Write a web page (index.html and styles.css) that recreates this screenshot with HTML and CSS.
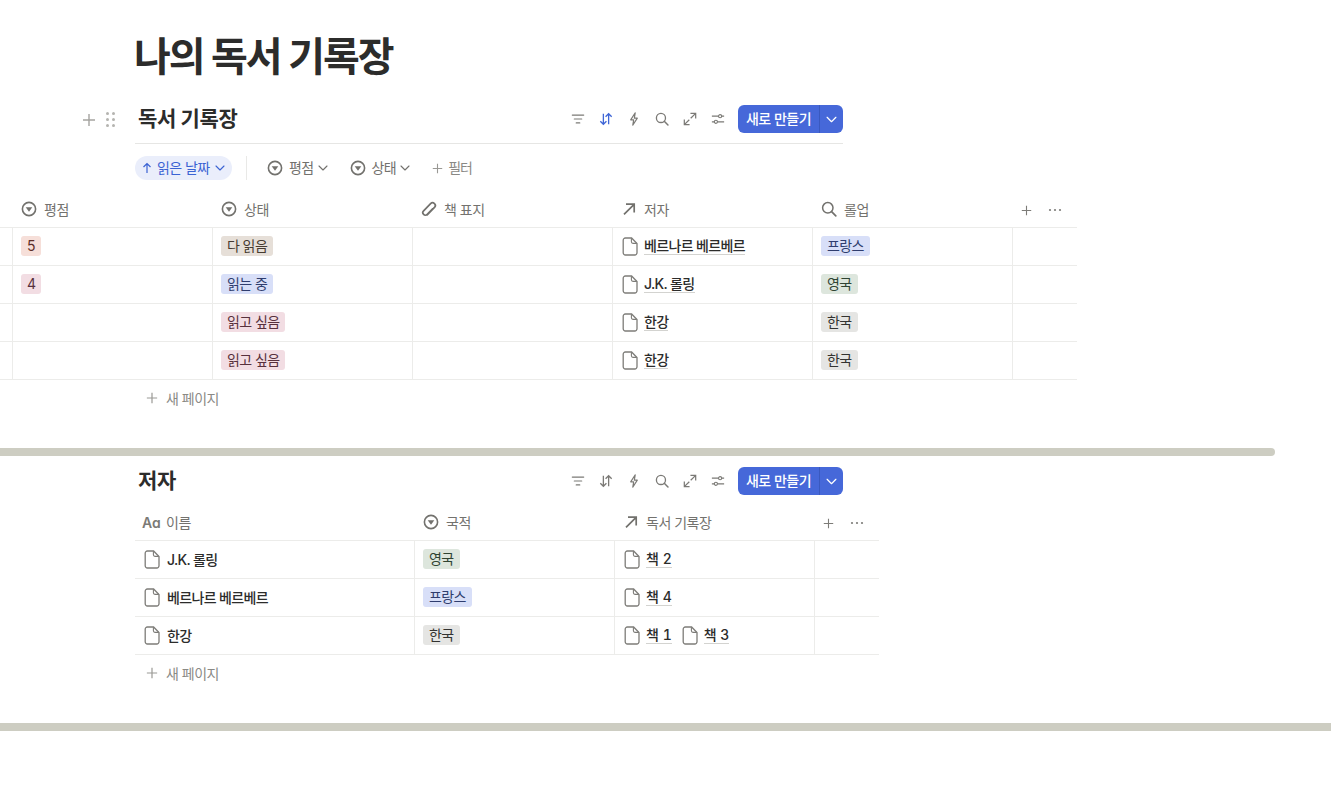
FILE: index.html
```html
<!DOCTYPE html>
<html lang="ko">
  <head>
    <meta charset="UTF-8" />
    <title>나의 독서 기록장</title>
    <link rel="stylesheet" href="styles.css">
  </head>
  <body>
    <svg class="defs" width="0" height="0">
      <defs>
        <symbol id="i-select" viewBox="0 0 16 16">
          <circle cx="8" cy="8" r="6.6" fill="none" stroke="currentColor" stroke-width="1.6" />
          <path d="M4.7 6.300h6.600L8 10.800z" fill="currentColor" />
        </symbol>
        <symbol id="i-doc" viewBox="0 0 16 19">
          <path d="M3.4 1h6.2l5.4 5.6v9.2a2.2 2.2 0 0 1-2.2 2.2H3.4a2.2 2.2 0 0 1-2.2-2.2V3.2A2.2 2.2 0 0 1 3.4 1z" fill="none" stroke="currentColor" stroke-width="1.3" />
          <path d="M9.4 1.2v3.6a1.6 1.6 0 0 0 1.6 1.6h3.8" fill="none" stroke="currentColor" stroke-width="1.1" />
        </symbol>
        <symbol id="i-relation" viewBox="0 0 16 16">
          <path d="M3 13.4 12.6 3.8M5 3.200h8.200v8.200" fill="none" stroke="currentColor" stroke-width="1.7" />
        </symbol>
        <symbol id="i-search" viewBox="0 0 16 16">
          <circle cx="6.800" cy="6.800" r="5.200" fill="none" stroke="currentColor" stroke-width="1.500" />
          <path d="m10.600 10.600 4.200 4.200" fill="none" stroke="currentColor" stroke-width="1.700" stroke-linecap="round" />
        </symbol>
        <symbol id="i-clip" viewBox="0 0 16 16">
          <path d="M6.200 13.900 13.500 6.400a2.700 2.700 0 0 0-3.900-3.800L2.600 9.800a2.500 2.500 0 0 0 3.600 3.600l5.400-5.600" fill="none" stroke="currentColor" stroke-width="1.700" stroke-linecap="round" />
        </symbol>
        <symbol id="i-plus" viewBox="0 0 14 14">
          <path d="M7 1v12M1 7h12" fill="none" stroke="currentColor" stroke-width="1.400" />
        </symbol>
        <symbol id="i-chev" viewBox="0 0 10 6">
          <path d="m1 1 4 4 4-4" fill="none" stroke="currentColor" stroke-width="1.100" stroke-linecap="round" stroke-linejoin="round" />
        </symbol>
        <symbol id="i-more" viewBox="0 0 14 4">
          <circle cx="2" cy="2" r="1.100" fill="currentColor" />
          <circle cx="7" cy="2" r="1.100" fill="currentColor" />
          <circle cx="12" cy="2" r="1.100" fill="currentColor" />
        </symbol>
        <symbol id="i-filter" viewBox="0 0 16 16">
          <path d="M1.500 3.500h13M3.800 8h8.400M6 12.500h4" fill="none" stroke="currentColor" stroke-width="1.400" stroke-linecap="round" />
        </symbol>
        <symbol id="i-sort" viewBox="0 0 16 16">
          <path d="M5 2v12M1.500 10.500 5 14l3.500-3.500M11 14V2M7.500 5.500 11 2l3.500 3.500" fill="none" stroke="currentColor" stroke-width="1.500" />
        </symbol>
        <symbol id="i-bolt" viewBox="0 0 16 16">
          <path d="M9.400 1 4.200 9h3.400l-1 6 5.200-8H8.400z" fill="none" stroke="currentColor" stroke-width="1.300" stroke-linejoin="round" />
        </symbol>
        <symbol id="i-expand" viewBox="0 0 16 16">
          <path d="M8.800 7.200 14.500 1.500M8.500 1.500h6v6M7.200 8.800 1.500 14.500M1.500 8.500v6h6" fill="none" stroke="currentColor" stroke-width="1.400" />
        </symbol>
        <symbol id="i-sliders" viewBox="0 0 16 16">
          <path d="M1 4.800h7.600M12.200 4.800H15M1 11.200h2.800M7.400 11.200H15" fill="none" stroke="currentColor" stroke-width="1.400" />
          <circle cx="10.400" cy="4.800" r="1.800" fill="none" stroke="currentColor" stroke-width="1.300" />
          <circle cx="5.600" cy="11.200" r="1.800" fill="none" stroke="currentColor" stroke-width="1.300" />
        </symbol>
      </defs>
    </svg>

    <h1 class="page-title">나의 독서 기록장</h1>

    <section class="view">
      <div class="view-head view-head-line">
        <div class="block-handle">
          <svg class="handle-plus"><use href="#i-plus" /></svg>
          <span class="handle-dots"><i></i><i></i><i></i><i></i><i></i><i></i></span>
        </div>
        <h2 class="view-title">독서 기록장</h2>
        <div class="tools">
          <svg class="tool"><use href="#i-filter" /></svg>
          <svg class="tool tool-on"><use href="#i-sort" /></svg>
          <svg class="tool"><use href="#i-bolt" /></svg>
          <svg class="tool"><use href="#i-search" /></svg>
          <svg class="tool"><use href="#i-expand" /></svg>
          <svg class="tool"><use href="#i-sliders" /></svg>
        </div>
        <div class="new-btn">
          <span class="new-main">새로 만들기</span>
          <span class="new-arrow"><svg class="chev-white"><use href="#i-chev" /></svg></span>
        </div>
      </div>

      <div class="filters">
        <span class="sort-chip">
          <svg class="chip-arrow" viewBox="0 0 10 12"><path d="M5 11V1.500M1.500 5 5 1.500 8.500 5" fill="none" stroke="currentColor" stroke-width="1.200" /></svg>
          읽은 날짜
          <svg class="chev"><use href="#i-chev" /></svg>
        </span>
        <span class="filter-sep"></span>
        <span class="filter-item"><svg class="icon"><use href="#i-select" /></svg>평점<svg class="chev"><use href="#i-chev" /></svg></span>
        <span class="filter-item"><svg class="icon"><use href="#i-select" /></svg>상태<svg class="chev"><use href="#i-chev" /></svg></span>
        <span class="filter-add"><svg class="plus-sm"><use href="#i-plus" /></svg>필터</span>
      </div>
    </section>

    <div class="table books">
      <div class="row head">
        <div class="cell"></div>
        <div class="cell"><svg class="icon"><use href="#i-select" /></svg>평점</div>
        <div class="cell"><svg class="icon"><use href="#i-select" /></svg>상태</div>
        <div class="cell"><svg class="icon"><use href="#i-clip" /></svg>책 표지</div>
        <div class="cell"><svg class="icon"><use href="#i-relation" /></svg>저자</div>
        <div class="cell"><svg class="icon"><use href="#i-search" /></svg>롤업</div>
        <div class="cell head-actions"><svg class="plus-sm"><use href="#i-plus" /></svg><svg class="more"><use href="#i-more" /></svg></div>
      </div>
      <div class="row">
        <div class="cell"></div>
        <div class="cell"><span class="tag red">5</span></div>
        <div class="cell"><span class="tag brown">다 읽음</span></div>
        <div class="cell"></div>
        <div class="cell"><span class="link"><svg class="doc"><use href="#i-doc" /></svg><b>베르나르 베르베르</b></span></div>
        <div class="cell"><span class="tag blue">프랑스</span></div>
        <div class="cell"></div>
      </div>
      <div class="row">
        <div class="cell"></div>
        <div class="cell"><span class="tag pink">4</span></div>
        <div class="cell"><span class="tag blue">읽는 중</span></div>
        <div class="cell"></div>
        <div class="cell"><span class="link"><svg class="doc"><use href="#i-doc" /></svg><b>J.K. 롤링</b></span></div>
        <div class="cell"><span class="tag green">영국</span></div>
        <div class="cell"></div>
      </div>
      <div class="row">
        <div class="cell"></div>
        <div class="cell"></div>
        <div class="cell"><span class="tag pink">읽고 싶음</span></div>
        <div class="cell"></div>
        <div class="cell"><span class="link"><svg class="doc"><use href="#i-doc" /></svg><b>한강</b></span></div>
        <div class="cell"><span class="tag gray">한국</span></div>
        <div class="cell"></div>
      </div>
      <div class="row">
        <div class="cell"></div>
        <div class="cell"></div>
        <div class="cell"><span class="tag pink">읽고 싶음</span></div>
        <div class="cell"></div>
        <div class="cell"><span class="link"><svg class="doc"><use href="#i-doc" /></svg><b>한강</b></span></div>
        <div class="cell"><span class="tag gray">한국</span></div>
        <div class="cell"></div>
      </div>
    </div>
    <div class="new-page"><svg class="plus-sm"><use href="#i-plus" /></svg>새 페이지</div>

    <div class="divider divider-short"></div>

    <section class="view">
      <div class="view-head view-head-second">
        <h2 class="view-title">저자</h2>
        <div class="tools">
          <svg class="tool"><use href="#i-filter" /></svg>
          <svg class="tool"><use href="#i-sort" /></svg>
          <svg class="tool"><use href="#i-bolt" /></svg>
          <svg class="tool"><use href="#i-search" /></svg>
          <svg class="tool"><use href="#i-expand" /></svg>
          <svg class="tool"><use href="#i-sliders" /></svg>
        </div>
        <div class="new-btn">
          <span class="new-main">새로 만들기</span>
          <span class="new-arrow"><svg class="chev-white"><use href="#i-chev" /></svg></span>
        </div>
      </div>
    </section>

    <div class="table authors">
      <div class="row head">
        <div class="cell name-head"><span class="aa">Aa</span>이름</div>
        <div class="cell"><svg class="icon"><use href="#i-select" /></svg>국적</div>
        <div class="cell"><svg class="icon"><use href="#i-relation" /></svg>독서 기록장</div>
        <div class="cell head-actions"><svg class="plus-sm"><use href="#i-plus" /></svg><svg class="more"><use href="#i-more" /></svg></div>
      </div>
      <div class="row">
        <div class="cell name-cell"><svg class="doc"><use href="#i-doc" /></svg><b>J.K. 롤링</b></div>
        <div class="cell"><span class="tag green">영국</span></div>
        <div class="cell"><span class="link"><svg class="doc"><use href="#i-doc" /></svg><b class="book">책 2</b></span></div>
        <div class="cell"></div>
      </div>
      <div class="row">
        <div class="cell name-cell"><svg class="doc"><use href="#i-doc" /></svg><b>베르나르 베르베르</b></div>
        <div class="cell"><span class="tag blue">프랑스</span></div>
        <div class="cell"><span class="link"><svg class="doc"><use href="#i-doc" /></svg><b class="book">책 4</b></span></div>
        <div class="cell"></div>
      </div>
      <div class="row">
        <div class="cell name-cell"><svg class="doc"><use href="#i-doc" /></svg><b>한강</b></div>
        <div class="cell"><span class="tag gray">한국</span></div>
        <div class="cell links">
          <span class="link"><svg class="doc"><use href="#i-doc" /></svg><b class="book">책 1</b></span>
          <span class="link"><svg class="doc"><use href="#i-doc" /></svg><b class="book">책 3</b></span>
        </div>
        <div class="cell"></div>
      </div>
    </div>
    <div class="new-page"><svg class="plus-sm"><use href="#i-plus" /></svg>새 페이지</div>

    <div class="divider divider-full"></div>
  </body>
</html>
```

FILE: styles.css
```css
* {
  margin: 0;
  padding: 0;
  box-sizing: border-box;
}

body {
  width: 1331px;
  height: 799px;
  overflow: hidden;
  background-color: #fff;
  color: #2c2c2b;
  font-family: Inter, "Noto Sans CJK KR", sans-serif;
  font-size: 14px;
}

.defs {
  position: absolute;
}

svg {
  display: block;
  flex: none;
}

.page-title {
  margin: 34px 0 0 134px;
  height: 46px;
  font-size: 40px;
  line-height: 46px;
  font-weight: 700;
  letter-spacing: -2px;
  color: #2c2c2b;
}

/* view header */
.view {
  margin-left: 135px;
  width: 708px;
}

.view-head {
  position: relative;
  display: flex;
  padding-left: 3px;
}

.view-head-line {
  margin-top: 25px;
  height: 39px;
  border-bottom: 1px solid #e6e6e4;
}

.view-head-second {
  margin-top: 11px;
  height: 28px;
}

.block-handle {
  position: absolute;
  left: -53px;
  top: 7px;
  display: flex;
  align-items: center;
  gap: 10px;
}

.handle-plus {
  width: 14px;
  height: 14px;
  color: #a5a4a0;
}

.handle-dots {
  display: grid;
  grid-template-columns: 3px 3px;
  grid-auto-rows: 3px;
  column-gap: 3px;
  row-gap: 3px;
}

.handle-dots i {
  width: 3px;
  height: 3px;
  border-radius: 50%;
  background-color: #b5b4b0;
}

.view-title {
  font-size: 21px;
  line-height: 28px;
  font-weight: 700;
  letter-spacing: -0.35px;
  color: #2c2c2b;
}

.tools {
  margin-left: auto;
  display: flex;
  align-items: center;
  height: 28px;
  gap: 14px;
  padding-right: 13px;
  color: #7b7a76;
}

.tool {
  width: 14px;
  height: 14px;
}

.tool-on {
  color: #3f66d6;
}

.new-btn {
  display: flex;
  width: 105px;
  height: 28px;
  border-radius: 6px;
  overflow: hidden;
  background-color: #4668d9;
  color: #fff;
  font-weight: 500;
  letter-spacing: -0.5px;
  line-height: 28px;
}

.new-main {
  width: 81px;
  text-align: center;
  white-space: nowrap;
}

.new-arrow {
  flex: 1;
  display: flex;
  align-items: center;
  justify-content: center;
  border-left: 1px solid #3a59bf;
}

.chev-white {
  width: 11px;
  height: 7px;
}

/* filter row */
.filters {
  margin-top: 12px;
  height: 24px;
  display: flex;
  align-items: center;
  color: #72716d;
  letter-spacing: -0.6px;
  white-space: nowrap;
  line-height: 22px;
}

.sort-chip {
  width: 97px;
  height: 24px;
  padding-left: 7px;
  display: flex;
  align-items: center;
  border-radius: 12px;
  background-color: #eaeefb;
  color: #3b63d3;
}

.chip-arrow {
  width: 10px;
  height: 12px;
  margin-right: 5px;
}

.chev {
  width: 10px;
  height: 6px;
  margin-left: 4px;
}

.sort-chip .chev {
  margin-left: 6px;
}

.filter-sep {
  width: 1px;
  height: 24px;
  margin: 0 20px 0 14px;
  background-color: #e9e9e7;
}

.filter-item {
  display: flex;
  align-items: center;
  margin-right: 22px;
}

.filter-add {
  display: flex;
  align-items: center;
  color: #8a8985;
  letter-spacing: -0.9px;
}

.filter-add .plus-sm {
  margin-right: 5px;
}

.icon {
  width: 16px;
  height: 16px;
  margin-right: 6px;
  color: #72716d;
}

.plus-sm {
  width: 11px;
  height: 11px;
  color: #9a9995;
}

/* tables */
.table {
  color: #2c2c2b;
}

.books {
  margin-top: 12px;
  width: 1077px;
}

.authors {
  margin: 10px 0 0 135px;
  width: 744px;
}

.row {
  display: grid;
  height: 38px;
  border-bottom: 1px solid #ececea;
}

.books .row {
  grid-template-columns: 13px repeat(5, 200px) 64px;
}

.authors .row {
  grid-template-columns: 280px 200px 200px 64px;
}

.row.head {
  height: 36px;
  color: #73726e;
  letter-spacing: -0.5px;
}

.cell {
  display: flex;
  align-items: center;
  gap: 8px;
  padding-left: 8px;
  padding-bottom: 1px;
  border-right: 1px solid #ececea;
  white-space: nowrap;
  overflow: hidden;
}

.cell:last-child {
  border-right: none;
}

.books .cell:first-child {
  padding-left: 0;
}

.head .cell {
  border-right: none;
  gap: 0;
  padding-left: 8px;
}

.head .icon {
  margin-right: 7px;
}

.head .head-actions {
  padding-top: 1px;
  padding-bottom: 0;
}

.head-actions .plus-sm {
  color: #7d7c78;
}

.more {
  width: 14px;
  height: 4px;
  margin-left: 16px;
  color: #7d7c78;
}

.head .name-head {
  padding-left: 7px;
}

.aa {
  width: 24px;
  color: #7b7a76;
  font-weight: 600;
  font-size: 14px;
  letter-spacing: 0;
  font-feature-settings: "cv11";
}

.name-cell {
  padding-left: 9px;
}

.name-cell b,
.link b {
  font-weight: 500;
  letter-spacing: -0.65px;
  color: #2c2c2b;
}

.doc {
  width: 16px;
  height: 19px;
  color: #7d7c78;
}

.name-cell .doc {
  margin-right: -1px;
}

.link {
  display: inline-flex;
  align-items: center;
  gap: 6px;
  margin-left: 1px;
}

.links {
  gap: 9px;
}

.link b {
  border-bottom: 1px solid #d3d3d0;
  line-height: 17px;
}

.link b.book {
  letter-spacing: 0;
  font-variant-numeric: tabular-nums;
}

.tag {
  height: 20px;
  padding: 0 6px;
  border-radius: 3px;
  line-height: 20px;
  letter-spacing: -0.6px;
}

.tag.red {
  background-color: #f6dfd9;
  color: #5d2f28;
}

.tag.pink {
  background-color: #f2dde3;
  color: #57303c;
}

.tag.brown {
  background-color: #e6dfd8;
  color: #463b30;
}

.tag.blue {
  background-color: #d8dff8;
  color: #2f3d6e;
}

.tag.green {
  background-color: #dde6dd;
  color: #2f4433;
}

.tag.gray {
  background-color: #e5e5e3;
  color: #333331;
}

.new-page {
  margin-left: 146px;
  height: 38px;
  padding-bottom: 2px;
  display: flex;
  align-items: center;
  color: #8a8985;
  letter-spacing: -0.5px;
}

.new-page .plus-sm {
  width: 12px;
  height: 12px;
  margin-right: 8px;
}

.divider {
  height: 8px;
  background-color: #cdcdc2;
}

.divider-short {
  margin-top: 30px;
  width: 1275px;
  border-radius: 0 4px 4px 0;
}

.divider-full {
  margin-top: 30px;
  width: 100%;
}
```
